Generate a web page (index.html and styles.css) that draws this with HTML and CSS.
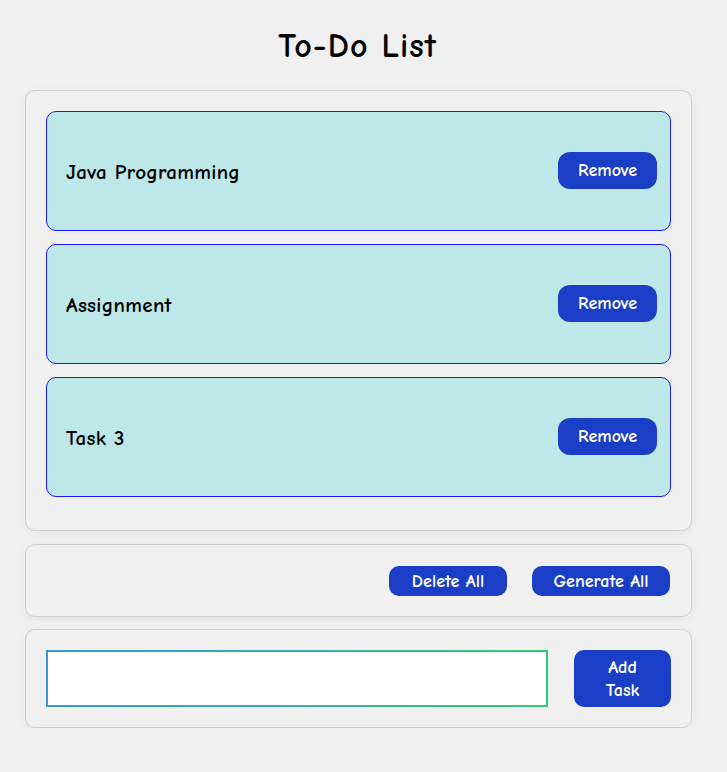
FILE: index.html
```html
<!DOCTYPE html>
<html>
<head>
<meta charset="utf-8">
<link rel="stylesheet" href="styles.css">
</head>
<body>
<div class="app">
  <h1 class="title">To-Do List</h1>
  <div class="panel list">
    <div class="item"><span class="item-text">Java Programming</span><button class="btn remove">Remove</button></div>
    <div class="item"><span class="item-text">Assignment</span><button class="btn remove">Remove</button></div>
    <div class="item"><span class="item-text">Task 3</span><button class="btn remove">Remove</button></div>
  </div>
  <div class="panel actions">
    <button class="btn small">Delete All</button>
    <button class="btn small">Generate All</button>
  </div>
  <div class="panel add">
    <div class="input-wrap"><input class="task-input" type="text"></div>
    <button class="btn add-btn">Add Task</button>
  </div>
</div>
</body>
</html>
```
FILE: styles.css
```css
html, body {
  margin: 0;
  padding: 0;
  background: #f0f0f0;
}
body {
  font-family: "Comic Sans MS", "Comic Neue", "Noto Sans", sans-serif;
  color: #000;
}
.app {
  width: 667px;
  margin-left: 25px;
  display: flex;
  flex-direction: column;
}
.title {
  margin: 26px 0 0;
  height: 64px;
  text-align: center;
  font-size: 34px;
  font-weight: bold;
  line-height: 40px;
  letter-spacing: 1px;
  padding-right: 2px;
}
.panel {
  box-sizing: border-box;
  border: 1px solid #cfcfcf;
  border-radius: 10px;
  background: #f0f0f0;
  box-shadow: 0 2px 10px rgba(0,0,0,0.06);
  padding: 20px;
}
.list {
  height: 441px;
  display: flex;
  flex-direction: column;
  gap: 13px;
}
.item {
  box-sizing: border-box;
  height: 120px;
  border: 1px solid #1a1aff;
  border-radius: 10px;
  background: #bde7e8;
  display: flex;
  align-items: center;
  justify-content: space-between;
  padding: 0 13px 0 19px;
}
.item-text {
  font-size: 21px;
  font-weight: bold;
  letter-spacing: 0.3px;
  margin-top: 2px;
}
.btn {
  font-family: inherit;
  background: #1a3ec6;
  color: #fff;
  border: none;
  font-weight: bold;
  cursor: pointer;
}
.remove {
  width: 99px;
  height: 37px;
  border-radius: 12px;
  font-size: 18px;
  margin-top: -1px;
  padding: 0;
}
.actions {
  margin-top: 13px;
  height: 73px;
  display: flex;
  justify-content: flex-end;
  align-items: center;
  gap: 25px;
  padding-right: 21px;
}
.small {
  height: 30px;
  border-radius: 10px;
  font-size: 18px;
  padding: 0;
  padding-top: 2px;
}
.small:first-child { width: 118px; }
.small:last-child { width: 138px; }
.add {
  margin-top: 12px;
  height: 99px;
  display: flex;
  align-items: center;
  gap: 26px;
}
.input-wrap {
  width: 503px;
  height: 57px;
  box-sizing: border-box;
  padding: 2px;
  background: linear-gradient(to right, #3498db, #2ecc71);
}
.task-input {
  display: block;
  width: 100%;
  height: 100%;
  box-sizing: border-box;
  border: none;
  outline: none;
  background: #fff;
  margin: 0;
}
.add-btn {
  width: 97px;
  height: 57px;
  border-radius: 10px;
  font-size: 18px;
  line-height: 23px;
  padding: 0 18px;
}
```
